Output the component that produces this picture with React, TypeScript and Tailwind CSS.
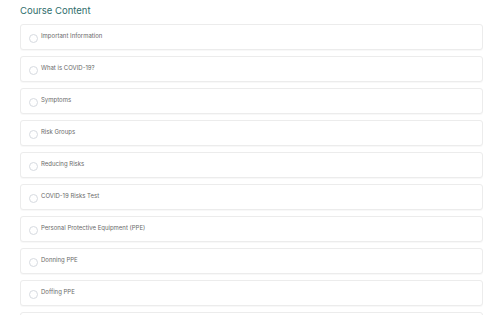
import React from "react";

const items = [
  "Important Information",
  "What is COVID-19?",
  "Symptoms",
  "Risk Groups",
  "Reducing Risks",
  "COVID-19 Risks Test",
  "Personal Protective Equipment (PPE)",
  "Donning PPE",
  "Doffing PPE",
  "",
];

export default function App() {
  return (
    <div
      className="w-[500px] h-[315px] overflow-hidden bg-white pl-5"
      style={{ fontFamily: "Inter, 'Noto Sans', sans-serif" }}
    >
      <h2 className="pt-[4px] text-[9.5px] leading-[14px] text-[#2f6e6c]">
        Course Content
      </h2>
      <div className="mt-[6px] flex w-[463px] flex-col gap-[6px]">
        {items.map((t, i) => (
          <div
            key={i}
            className="flex h-[26px] shrink-0 items-center rounded-[3px] border border-[#ececec] bg-white pl-[8px] shadow-[0_1px_1px_rgba(0,0,0,0.03)]"
          >
            <span className="mt-[3px] h-[9px] w-[9px] shrink-0 rounded-full border border-[#d6dae0]" />
            <span className="ml-[3px] mb-[2px] text-[6px] leading-[8px] text-[#6a6a6a]">
              {t}
            </span>
          </div>
        ))}
      </div>
    </div>
  );
}
